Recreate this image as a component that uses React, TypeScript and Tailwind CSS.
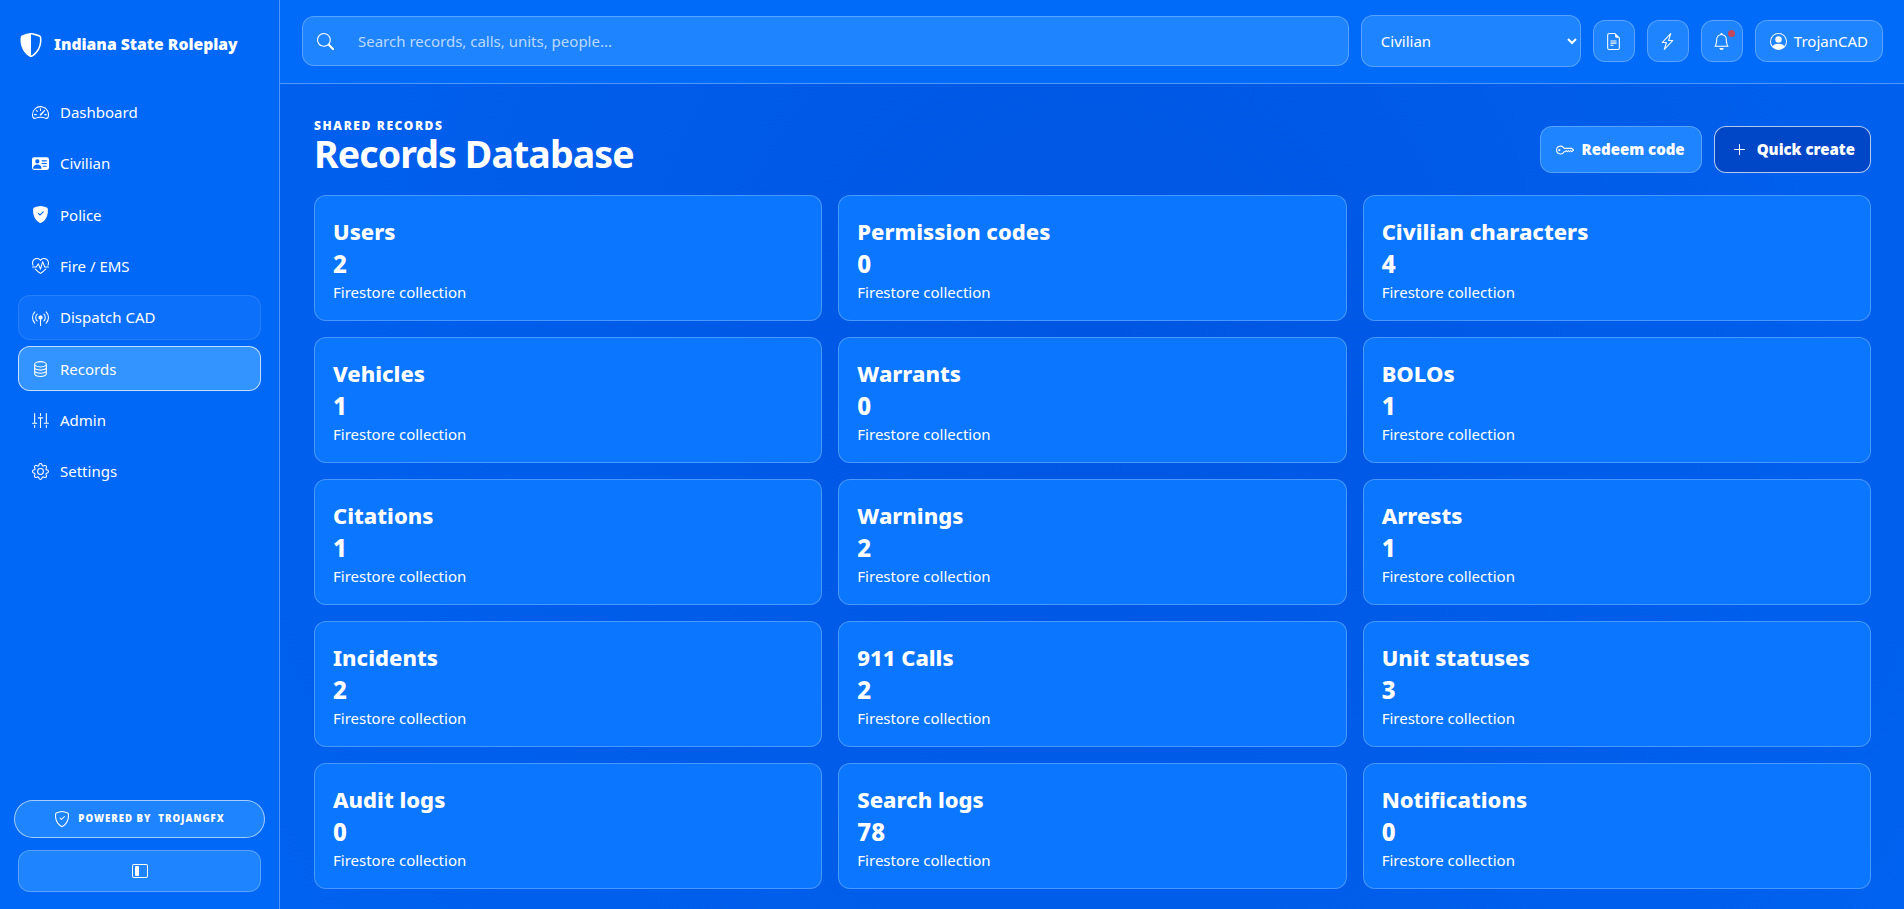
import {
  BsSpeedometer2,
  BsPersonVcardFill,
  BsShieldFillCheck,
  BsHeartPulse,
  BsBroadcastPin,
  BsDatabase,
  BsSliders2Vertical,
  BsGear,
  BsShieldCheck,
  BsShieldShaded,
  BsLayoutSidebarInset,
  BsSearch,
  BsFileEarmarkText,
  BsLightningCharge,
  BsBell,
  BsPersonCircle,
  BsKey,
  BsPlusLg,
} from "react-icons/bs";

const navItems = [
  { label: "Dashboard", icon: <BsSpeedometer2 /> },
  { label: "Civilian", icon: <BsPersonVcardFill /> },
  { label: "Police", icon: <BsShieldFillCheck /> },
  { label: "Fire / EMS", icon: <BsHeartPulse /> },
  { label: "Dispatch CAD", icon: <BsBroadcastPin />, hover: true },
  { label: "Records", icon: <BsDatabase />, active: true },
  { label: "Admin", icon: <BsSliders2Vertical /> },
  { label: "Settings", icon: <BsGear /> },
];

const records = [
  ["Users", 2],
  ["Permission codes", 0],
  ["Civilian characters", 4],
  ["Vehicles", 1],
  ["Warrants", 0],
  ["BOLOs", 1],
  ["Citations", 1],
  ["Warnings", 2],
  ["Arrests", 1],
  ["Incidents", 2],
  ["911 Calls", 2],
  ["Unit statuses", 3],
  ["Audit logs", 0],
  ["Search logs", 78],
  ["Notifications", 0],
] as const;

const Sidebar = () => {
  return (
    <aside className="flex h-full w-[280px] shrink-0 flex-col border-r border-white/30 bg-[#0068f7] px-[18px] pb-[17px]">
      <div className="flex h-[89px] items-center gap-[11px] pl-px">
        <BsShieldShaded className="text-[24px] text-white" />
        <span className="text-[15.7px] font-black whitespace-nowrap text-white">Indiana State Roleplay</span>
      </div>
      <nav className="flex flex-col gap-[6.4px]">
        {navItems.map((item) => {
          let state = "border-transparent";
          if (item.active) state = "border-white/70 bg-[#3393ff]";
          if (item.hover) state = "border-white/10 bg-[#0d70fa]";
          return (
            <a key={item.label} className={`flex h-[45px] items-center gap-[11px] rounded-[12px] border px-[13px] pt-px text-[15px] text-white ${state}`}>
              <span className="text-[17px]">{item.icon}</span>
              {item.label}
            </a>
          );
        })}
      </nav>
      <div className="mt-auto flex flex-col gap-[12px]">
        <div className="-mx-1 flex h-[38px] items-center justify-center gap-[8px] rounded-full border border-white/60 bg-[#1f84ff] text-[9.6px] font-black tracking-[1px] text-white">
          <BsShieldCheck className="text-[16px]" />
          <span className="whitespace-pre">POWERED BY  TROJANGFX</span>
        </div>
        <button className="flex h-[42px] items-center justify-center rounded-[12px] border border-white/25 bg-[#1f84ff] text-white">
          <BsLayoutSidebarInset className="text-[16px]" />
        </button>
      </div>
    </aside>
  );
};

const IconButton = ({ children }: { children: React.ReactNode }) => {
  return (
    <button className="relative flex h-[42px] w-[42px] items-center justify-center rounded-[12px] border border-white/25 bg-[#1f84ff] text-[17px] text-white">
      {children}
    </button>
  );
};

const Topbar = () => {
  return (
    <header className="flex h-[84px] shrink-0 items-center gap-[12px] border-b border-white/30 bg-[#006bf9] pr-[21px] pb-[1px] pl-[22px]">
      <div className="flex h-[50px] flex-1 items-center rounded-[12px] border border-white/25 bg-[#1f84ff] pl-[14px]">
        <BsSearch className="text-[17px] text-white" />
        <input
          className="ml-[24px] flex-1 bg-transparent text-[15px] text-white outline-none placeholder:text-white/70"
          placeholder="Search records, calls, units, people..."
        />
      </div>
      <select className="h-[52px] w-[220px] rounded-[12px] border border-white/25 bg-[#1f84ff] pl-[15px] text-[15px] text-white outline-none">
        <option>Civilian</option>
      </select>
      <IconButton>
        <BsFileEarmarkText />
      </IconButton>
      <IconButton>
        <BsLightningCharge />
      </IconButton>
      <IconButton>
        <BsBell />
        <span className="absolute top-[9px] right-[7px] h-[7px] w-[7px] rounded-full bg-[#c4475a]"></span>
      </IconButton>
      <button className="flex h-[42px] items-center gap-[7px] rounded-[12px] border border-white/25 bg-[#1f84ff] px-[14px] text-[15px] text-white">
        <BsPersonCircle className="text-[17px]" />
        TrojanCAD
      </button>
    </header>
  );
};

const RecordCard = ({ title, count }: { title: string; count: number }) => {
  return (
    <div className="h-[126px] rounded-[12px] border border-white/25 bg-[#0b76ff] px-[18px] pt-[19px] text-white">
      <div className="text-[22px] leading-[33px] font-extrabold">{title}</div>
      <div className="text-[24px] leading-[32px] font-extrabold">{count}</div>
      <div className="text-[15px] leading-[25px]">Firestore collection</div>
    </div>
  );
};

export default function App() {
  return (
    <div className="flex h-screen overflow-hidden font-['Noto_Sans',sans-serif]">
      <Sidebar />
      <main className="flex min-w-0 flex-1 flex-col bg-[#005ae8]">
        <Topbar />
        <div className="flex-1 bg-[radial-gradient(circle_at_50%_30%,#0056e2,#0062f0)] pt-[36px] pr-[33px] pl-[34px]">
          <div className="mb-[19px] flex items-start justify-between">
            <div>
              <div className="text-[12px] leading-[12px] font-black tracking-[1.6px] text-white">SHARED RECORDS</div>
              <h1 className="text-[37.5px] leading-[44px] font-bold tracking-[-0.9px] text-white">Records Database</h1>
            </div>
            <div className="mt-[6px] flex gap-[12px]">
              <button className="flex h-[47px] items-center gap-[8px] rounded-[12px] border border-white/25 bg-[#1f84ff] pr-[16px] pl-[15px] text-[15px] font-black text-white">
                <BsKey className="text-[18px]" />
                Redeem code
              </button>
              <button className="flex h-[47px] items-center gap-[10px] rounded-[12px] border border-white/70 bg-[#0047c7] pr-[15px] pl-[17px] text-[15px] font-black text-white">
                <BsPlusLg className="text-[15px]" />
                Quick create
              </button>
            </div>
          </div>
          <div className="grid grid-cols-3 gap-x-[16px] gap-y-[16px]">
            {records.map(([title, count]) => (
              <RecordCard key={title} title={title} count={count} />
            ))}
          </div>
        </div>
      </main>
    </div>
  );
}
